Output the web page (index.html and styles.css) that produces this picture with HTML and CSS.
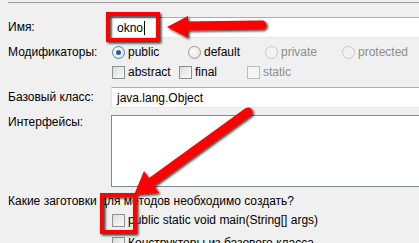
FILE: index.html
```html
<!DOCTYPE html>
<html lang="ru">
<head>
    <meta charset="UTF-8">
    <title>Новый класс</title>
    <link rel="stylesheet" href="styles.css">
</head>
<body>
    <div class="page">
        <div class="top-rule"></div>

        <div class="form">
            <div class="row row-name">
                <label class="label">Имя:</label>
                <div class="field"><span class="value">okno</span><span class="caret"></span></div>
            </div>

            <div class="row row-mods">
                <span class="label">Модификаторы:</span>
                <div class="options">
                    <span class="opt opt-public"><span class="radio checked"></span>public</span>
                    <span class="opt opt-default"><span class="radio"></span>default</span>
                    <span class="opt opt-private disabled"><span class="radio"></span>private</span>
                    <span class="opt disabled"><span class="radio"></span>protected</span>
                </div>
            </div>

            <div class="row row-flags">
                <span class="label"></span>
                <div class="options">
                    <span class="opt opt-abstract"><span class="check"></span>abstract</span>
                    <span class="opt opt-final"><span class="check"></span>final</span>
                    <span class="opt disabled"><span class="check"></span>static</span>
                </div>
            </div>

            <div class="row row-base">
                <label class="label">Базовый класс:</label>
                <div class="field"><span class="value">java.lang.Object</span></div>
            </div>

            <div class="row row-ifaces">
                <label class="label">Интерфейсы:</label>
                <div class="list"></div>
            </div>
        </div>

        <p class="question">Какие заготовки для методов необходимо создать?</p>

        <div class="stubs">
            <span class="opt"><span class="check"></span>public static void main(String[] args)</span>
            <span class="opt"><span class="check"></span>Конструкторы из базового класса</span>
        </div>

        <svg class="marks" width="419" height="243" viewBox="0 0 419 243">
            <defs>
                <filter id="shade" x="-20%" y="-20%" width="140%" height="140%">
                    <feDropShadow dx="1.5" dy="1.5" stdDeviation="1" flood-color="#000" flood-opacity="0.75"/>
                </filter>
            </defs>
            <g filter="url(#shade)">
                <rect x="108" y="14" width="50" height="26" fill="none" stroke="#ff0000" stroke-width="4"/>
                <line x1="185" y1="26" x2="262" y2="25" stroke="#ff0000" stroke-width="9" stroke-linecap="round"/>
                <polygon points="167,27 188,16 188,38" fill="#ff0000"/>

                <rect x="102" y="195" width="33" height="37" fill="none" stroke="#ff0000" stroke-width="4"/>
                <line x1="150" y1="183" x2="248" y2="112" stroke="#ff0000" stroke-width="9" stroke-linecap="round"/>
                <polygon points="134,195 159,193 144,171" fill="#ff0000"/>
            </g>
        </svg>
    </div>
</body>
</html>
```

FILE: styles.css
```css
body {
    margin: 0;
    padding: 0;
    background-color: #f0f0f0;
    font-family: 'Liberation Sans', Arial, sans-serif;
    font-size: 12px;
    color: #000;
}

.page {
    position: relative;
    width: 419px;
    height: 243px;
    overflow: hidden;
    padding-left: 8px;
    box-sizing: border-box;
}

.top-rule {
    height: 2px;
    border-bottom: 1px solid #a0a0a0;
    margin-bottom: 14px;
}

.form {
    display: flex;
    flex-direction: column;
}

.row {
    display: flex;
    align-items: center;
}

.label {
    width: 103px;
    flex-shrink: 0;
    line-height: 15px;
}

.field {
    display: flex;
    align-items: center;
    flex-shrink: 0;
    height: 19px;
    width: 360px;
    background: #fff;
    border-top: 1px solid #abadb3;
    border-left: 1px solid #e2e3ea;
    border-bottom: 1px solid #e3e9ef;
    padding-left: 5px;
}

.caret {
    width: 1px;
    height: 14px;
    background: #000;
    margin-left: 1px;
}

.row-mods {
    height: 20px;
    margin-top: 4px;
}

.row-flags {
    height: 20px;
}

.row-base {
    margin-top: 5px;
}

.row-ifaces {
    align-items: flex-start;
    margin-top: 7px;
}

.list {
    flex-shrink: 0;
    width: 360px;
    height: 70px;
    background: #fff;
    border: 1px solid #828790;
}

.options {
    display: flex;
    align-items: center;
}

.opt {
    display: flex;
    align-items: center;
    gap: 3px;
    white-space: nowrap;
    line-height: 15px;
}

.opt.disabled {
    color: #8d8d8d;
}

.opt-public { width: 76px; }
.opt-default { width: 77px; }
.opt-private { width: 77px; }
.opt-abstract { width: 67px; }
.opt-final { width: 68px; }

.radio {
    width: 11px;
    height: 11px;
    border-radius: 50%;
    border: 1px solid #9a9a9a;
    background: radial-gradient(circle at 40% 35%, #ffffff, #dcdcdc);
    margin-left: 1px;
    position: relative;
}

.radio.checked {
    border-color: #5a7fa8;
}

.radio.checked::after {
    content: "";
    position: absolute;
    left: 3px;
    top: 3px;
    width: 5px;
    height: 5px;
    border-radius: 50%;
    background: #1f5fa8;
}

.disabled .radio {
    border-color: #c6c6c6;
    background: #f2f2f2;
}

.check {
    width: 11px;
    height: 11px;
    border: 1px solid #8e8f8f;
    background: linear-gradient(135deg, #dcdcdc, #fbfbfb);
    margin-left: 1px;
}

.disabled .check {
    border-color: #bcbcbc;
    background: #f4f4f4;
}

.question {
    margin: 7px 0 0;
    line-height: 15px;
}

.stubs {
    display: flex;
    flex-direction: column;
    gap: 8px;
    padding-left: 103px;
    margin-top: 4px;
}

.marks {
    position: absolute;
    left: 0;
    top: 0;
}
```
